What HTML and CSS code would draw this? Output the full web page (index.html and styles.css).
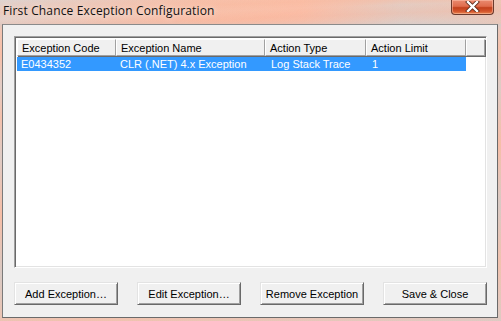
FILE: index.html
```html
<!DOCTYPE html>
<html>
<head>
<meta charset="utf-8">
<link rel="stylesheet" href="styles.css">
</head>
<body>
<div class="window">
  <div class="titlebar">
    <span class="title">First Chance Exception Configuration</span>
    <div class="close"><svg width="15" height="11" viewBox="0 0 15 11"><path d="M3 1 L12 10 M12 1 L3 10" stroke="#5a2a1a" stroke-width="4" stroke-linecap="square"/><path d="M3 1 L12 10 M12 1 L3 10" stroke="#ffffff" stroke-width="2.4" stroke-linecap="square"/></svg></div>
  </div>
  <div class="client">
    <div class="listbox">
      <div class="header">
        <div class="hcell c1">Exception Code</div>
        <div class="hcell c2">Exception Name</div>
        <div class="hcell c3">Action Type</div>
        <div class="hcell c4">Action Limit</div>
        <div class="hcell filler"></div>
      </div>
      <div class="row selected">
        <div class="cell c1">E0434352</div>
        <div class="cell c2">CLR (.NET) 4.x Exception</div>
        <div class="cell c3">Log Stack Trace</div>
        <div class="cell c4">1</div>
      </div>
    </div>
    <div class="buttons">
      <button class="btn">Add Exception…</button>
      <button class="btn">Edit Exception…</button>
      <button class="btn">Remove Exception</button>
      <button class="btn">Save &amp; Close</button>
    </div>
  </div>
</div>
</body>
</html>
```
FILE: styles.css
```css
html, body {
  margin: 0;
  padding: 0;
}
body {
  width: 501px;
  height: 321px;
  overflow: hidden;
  background:
    linear-gradient(180deg, rgba(255,255,255,0) 0px, rgba(255,255,255,0) 20px, rgba(210,200,198,0.6) 24px, rgba(240,190,170,0.3) 30px),
    linear-gradient(172deg, #d8cfcc 0%, #f3c8b6 8%, #fbbfa6 14%, #dcd4d2 22%, #f6c2ac 30%, #d7d2d1 40%, #f9bea5 55%, #cfcfcf 70%, #f2c4b0 85%, #d6d0ce 100%);
  font-family: "Liberation Sans", Arial, sans-serif;
  font-size: 11px;
}
.window {
  width: 501px;
  height: 321px;
  display: flex;
  flex-direction: column;
}
.titlebar {
  height: 25px;
  display: flex;
  justify-content: space-between;
  align-items: flex-start;
  background:
    linear-gradient(178deg, rgba(255,255,255,0) 0%, rgba(250,180,150,0.35) 30%, rgba(255,255,255,0) 45%, rgba(245,175,150,0.3) 65%, rgba(255,255,255,0) 100%),
    linear-gradient(90deg, rgba(225,215,212,0.6) 0%, rgba(250,190,165,0.55) 40%, rgba(252,190,168,0.5) 60%, rgba(215,210,208,0.55) 80%, rgba(240,195,175,0.5) 100%);
}
.title {
  font-family: "Open Sans", "Noto Sans", sans-serif;
  font-size: 12px;
  color: #111;
  margin: 2px 0 0 3px;
  letter-spacing: 0.15px;
  text-shadow: 0 0 6px rgba(255,255,255,0.8);
}
.close {
  width: 41px;
  height: 14px;
  margin-right: 7px;
  border: 1px solid #6b3a2e;
  border-top: none;
  border-radius: 0 0 4px 4px;
  background: linear-gradient(180deg, #e98a70 0%, #e06c4c 45%, #c2401c 55%, #d4542c 80%, #e9874f 100%);
  display: flex;
  align-items: center;
  justify-content: center;
  box-shadow: inset 0 0 0 1px rgba(255,200,180,0.5);
}
.close svg { display: block; margin-top: -1px; }
.client {
  margin: 0 3px 3px 2px;
  height: 291px;
  border: 1px solid #6f6f6f;
  border-color: #8a8a8a #6a6a6a #6a6a6a #7a7a7a;
  background: #f0f0f0;
  padding: 11px 10px 0 11px;
  display: flex;
  flex-direction: column;
}
.listbox {
  background: #ffffff;
  border: 1px solid;
  border-color: #a0a0a0 #ffffff #ffffff #a0a0a0;
  box-shadow: inset 1px 1px 0 #696969, inset -1px -1px 0 #e3e3e3;
  padding: 2px 0 0 2px;
  box-sizing: border-box;
  height: 232px;
  width: 473px;
}
.header {
  display: flex;
  height: 17px;
}
.hcell {
  box-sizing: border-box;
  height: 17px;
  background: #f0f0f0;
  border-top: 1px solid #ffffff;
  border-left: 1px solid #ffffff;
  border-right: 1px solid #a0a0a0;
  border-bottom: 1px solid #a0a0a0;
  box-shadow: 1px 1px 0 #696969;
  padding: 2px 0 0 4px;
  line-height: 12px;
  color: #000;
  white-space: nowrap;
  position: relative;
}
.c1 { width: 99px; }
.c2 { width: 149px; }
.c3 { width: 101px; }
.c4 { width: 100px; }
.filler { width: 19px; }
.row {
  display: flex;
  height: 14px;
  margin-top: 1px;
  width: 449px;
}
.row.selected {
  background: #3399ff;
  color: #ffffff;
}
.cell {
  box-sizing: border-box;
  padding-left: 4px;
  line-height: 14px;
  white-space: nowrap;
}
.cell.c3 { padding-left: 6px; }
.cell.c4 { padding-left: 6px; }
.buttons {
  display: flex;
  gap: 19px;
  margin-top: 14px;
  margin-left: 0;
}
.btn {
  width: 105px;
  height: 23px;
  box-sizing: border-box;
  font-family: "Liberation Sans", Arial, sans-serif;
  font-size: 11px;
  color: #000;
  background: #f0f0f0;
  border: 1px solid;
  border-color: #e3e3e3 #696969 #696969 #e3e3e3;
  box-shadow: inset 1px 1px 0 #ffffff, inset -1px -1px 0 #a0a0a0;
  padding: 0;
  margin: 0;
}
```
